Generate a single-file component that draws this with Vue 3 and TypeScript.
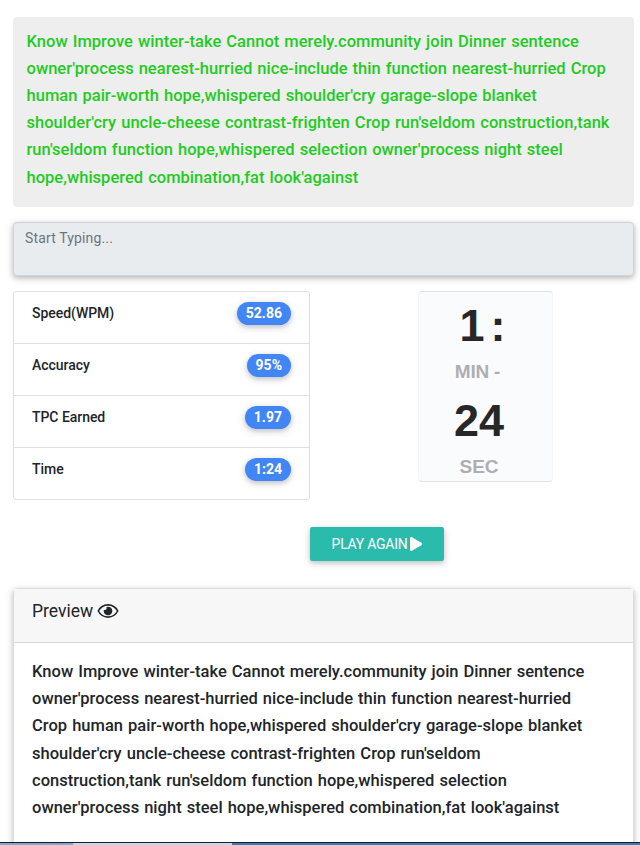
<script setup lang="ts">
    import { ref } from 'vue';

    interface Stat {
        label: string;
        value: string;
    }

    const typed = ref('');

    const targetLines = [
        'Know Improve winter-take Cannot merely.community join Dinner sentence',
        "owner'process nearest-hurried nice-include thin function nearest-hurried Crop",
        "human pair-worth hope,whispered shoulder'cry garage-slope blanket",
        "shoulder'cry uncle-cheese contrast-frighten Crop run'seldom construction,tank",
        "run'seldom function hope,whispered selection owner'process night steel",
        "hope,whispered combination,fat look'against",
    ];

    const previewLines = [
        'Know Improve winter-take Cannot merely.community join Dinner sentence',
        "owner'process nearest-hurried nice-include thin function nearest-hurried",
        "Crop human pair-worth hope,whispered shoulder'cry garage-slope blanket",
        "shoulder'cry uncle-cheese contrast-frighten Crop run'seldom",
        "construction,tank run'seldom function hope,whispered selection",
        "owner'process night steel hope,whispered combination,fat look'against",
    ];

    const stats: Stat[] = [
        { label: 'Speed(WPM)', value: '52.86' },
        { label: 'Accuracy', value: '95%' },
        { label: 'TPC Earned', value: '1.97' },
        { label: 'Time', value: '1:24' },
    ];
</script>

<template>
    <div class="page">
        <main class="content">
            <section class="target">
                <span v-for="line in targetLines" :key="line" class="line">{{ line }}</span>
            </section>

            <textarea v-model="typed" class="typing" placeholder="Start Typing..." disabled />

            <div class="results">
                <ul class="stats">
                    <li v-for="stat in stats" :key="stat.label">
                        <span>{{ stat.label }}</span>
                        <span class="badge">{{ stat.value }}</span>
                    </li>
                </ul>

                <div class="timer-col">
                    <div class="timer">
                        <div class="digits">1<span class="colon">:</span></div>
                        <div class="unit min">MIN -</div>
                        <div class="digits">24</div>
                        <div class="unit">SEC</div>
                    </div>
                </div>
            </div>

            <button class="again" type="button">
                <span>PLAY AGAIN</span>
                <svg viewBox="0 0 448 512" width="12" height="14" preserveAspectRatio="none">
                    <path
                        d="M424.4 214.7L72.4 6.6C43.8-10.3 0 6.1 0 47.9V464c0 37.5 40.7 60.1 72.4 41.3l352-208c31.4-18.5 31.5-64.1 0-82.6z"
                    />
                </svg>
            </button>

            <section class="preview">
                <header>
                    <span>Preview</span>
                    <svg viewBox="0 0 22 16" width="22" height="16">
                        <path
                            class="outline"
                            d="M1.3 8C3.4 4 6.9 1.9 11 1.9S18.6 4 20.7 8C18.6 12 15.1 14.1 11 14.1S3.4 12 1.3 8Z"
                        />
                        <path d="M11 3.7a4.3 4.3 0 1 1-4.1 3c1.5.9 3.4-.6 2.5-2.5.5-.3 1-.5 1.6-.5Z" />
                    </svg>
                </header>
                <div class="preview-body">
                    <span v-for="line in previewLines" :key="line" class="line">{{ line }}</span>
                </div>
            </section>
        </main>

        <div class="taskbar">
            <span class="task" />
            <span class="task active" />
            <span class="task rest" />
        </div>
    </div>
</template>

<style>
    body {
        margin: 0;
        background: #fff;
    }
</style>

<style scoped>
    .page {
        box-sizing: border-box;
        display: flex;
        flex-direction: column;
        height: 845px;
        overflow: hidden;
        font-family: Roboto, sans-serif;
        color: #212529;
    }

    .content {
        display: flex;
        flex: 1;
        flex-direction: column;
        min-height: 0;
        padding: 17px 6px 0 13px;
        overflow: hidden;
    }

    .line {
        display: block;
        font-size: 16.5px;
        font-weight: 500;
        line-height: 27.2px;
        letter-spacing: 0.02px;
        word-spacing: 0.9px;
        white-space: nowrap;
    }

    .target {
        box-sizing: border-box;
        flex: none;
        height: 190px;
        padding: 10.6px 13.5px;
        border-radius: 4px;
        background: #eee;
        color: #1fcb1f;
    }

    .typing {
        box-sizing: border-box;
        display: block;
        flex: none;
        width: 100%;
        height: 54px;
        margin: 15px 0 0;
        padding: 5px 11px;
        border: 1px solid #ced4da;
        border-radius: 4px;
        background: #e9ecef;
        box-shadow: 0 2px 5px rgba(0, 0, 0, 0.2), 0 2px 10px rgba(0, 0, 0, 0.12);
        font: 400 14px/21px Roboto, sans-serif;
        letter-spacing: 0.15px;
        resize: none;
    }

    .typing::placeholder {
        color: #6c757d;
    }

    .results {
        display: flex;
        flex: none;
        align-items: flex-start;
        margin-top: 15px;
    }

    .stats {
        box-sizing: border-box;
        width: 297px;
        margin: 0;
        padding: 0;
        border: 1px solid #dfdfdf;
        border-radius: 3px;
        list-style: none;
    }

    .stats li {
        box-sizing: border-box;
        display: flex;
        align-items: flex-start;
        justify-content: space-between;
        height: 52px;
        padding: 10px 18px;
        border-bottom: 1px solid #dfdfdf;
        font-size: 14px;
        font-weight: 500;
        line-height: 23px;
        letter-spacing: -0.05px;
    }

    .stats li:last-child {
        height: 51px;
        border-bottom: 0;
    }

    .badge {
        padding: 0 9px;
        border-radius: 160px;
        background: #4285f4;
        box-shadow: 0 2px 5px rgba(0, 0, 0, 0.16), 0 2px 10px rgba(0, 0, 0, 0.12);
        color: #fff;
        font-weight: 700;
        letter-spacing: 0;
    }

    .timer-col {
        display: flex;
        flex: 1;
        justify-content: center;
        padding-left: 27px;
    }

    .timer {
        box-sizing: border-box;
        width: 135px;
        height: 191px;
        padding-right: 13px;
        border: 1px solid #dee2e6;
        border-right-color: #f3f5f7;
        border-left-color: #f3f5f7;
        border-radius: 4px;
        background: #fafbfd;
        font-family: 'Liberation Sans', Arial, sans-serif;
        font-weight: 700;
        text-align: center;
    }

    .digits {
        height: 67px;
        color: #272727;
        font-size: 45px;
        line-height: 68px;
    }

    .colon {
        margin-left: 6px;
    }

    .digits:first-child {
        padding-left: 7px;
    }

    .unit {
        height: 28px;
        color: #aeaeb2;
        font-size: 19px;
        line-height: 26px;
    }

    .unit.min {
        padding-right: 3px;
        letter-spacing: -0.2px;
    }

    .again {
        display: flex;
        flex: none;
        align-items: center;
        align-self: flex-start;
        justify-content: center;
        gap: 3px;
        width: 134px;
        height: 34px;
        margin: 27px 0 0 297px;
        padding: 0;
        border: 0;
        border-radius: 2px;
        background: #2bbbad;
        box-shadow: 0 2px 5px rgba(0, 0, 0, 0.16), 0 2px 10px rgba(0, 0, 0, 0.12);
        color: #fff;
        font: 400 14px/20px Roboto, sans-serif;
        letter-spacing: -0.25px;
    }

    .again svg {
        fill: #fff;
    }

    .preview {
        box-sizing: border-box;
        flex: none;
        height: 275px;
        margin-top: 27px;
        border: 1px solid #dcdcdc;
        border-radius: 4px;
        box-shadow: 0 2px 5px rgba(0, 0, 0, 0.16), 0 2px 10px rgba(0, 0, 0, 0.12);
    }

    .preview header {
        box-sizing: border-box;
        display: flex;
        align-items: center;
        gap: 4px;
        height: 54px;
        padding: 0 18px 9px;
        border-bottom: 1px solid #d8d8d8;
        background: #f7f7f7;
        font-size: 17.5px;
    }

    .preview header svg {
        fill: #212529;
    }

    .preview header .outline {
        fill: none;
        stroke: #212529;
        stroke-width: 1.6;
    }

    .preview-body {
        padding: 15px 18px;
    }

    .taskbar {
        box-sizing: border-box;
        display: flex;
        flex: none;
        height: 3px;
        border-top: 1px solid #10202e;
    }

    .task {
        width: 73px;
        background: #7fa9c8;
    }

    .task.active {
        width: 159px;
        background: #c3dbe9;
    }

    .task.rest {
        flex: 1;
        background: #3b7cad;
    }
</style>
